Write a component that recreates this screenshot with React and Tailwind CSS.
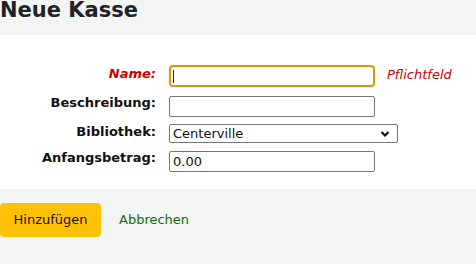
export default function App() {
  return (
    <div className="min-h-[264px] bg-[#f3f4f4] text-[#222] overflow-hidden" style={{ fontFamily: '"DejaVu Sans", sans-serif' }}>
      <h1 className="text-[21px] font-bold leading-[21px] mb-[14px] text-[#1f2226]">Neue Kasse</h1>

      <div className="bg-white pt-[30px] pb-[17px] w-full">
        <ol className="flex flex-col">
          <li className="flex items-start">
            <label className="w-[169px] text-right pr-[13px] text-[13px] leading-[15px] pt-[1px] font-bold italic text-[#c00]">Name:</label>
            <div className="w-[206px] h-[22px] border-2 border-[#e69500] rounded-[4px] bg-white flex items-center pl-[2px]">
              <div className="w-px h-[13px] bg-[#8b0000]" />
            </div>
            <span className="ml-[12px] mt-[2px] text-[13px] leading-[15px] italic text-[#c00]">Pflichtfeld</span>
          </li>

          <li className="flex items-start mt-[9px]">
            <label className="w-[169px] text-right pr-[13px] text-[13px] leading-[15px] -mt-[1px] font-bold text-[#111]">Beschreibung:</label>
            <div className="w-[206px] h-[21px] border border-[#767676] rounded-[2px] bg-white" />
          </li>

          <li className="flex items-start mt-[7px]">
            <label className="w-[169px] text-right pr-[13px] text-[13px] leading-[15px] font-bold text-[#111]">Bibliothek:</label>
            <div className="relative w-[229px] h-[19px] border border-[#767676] rounded-[2px] bg-white flex items-center pl-[3px] text-[13px] text-[#111]">
              Centerville
              <svg className="absolute right-[7px] top-[5px]" width="10" height="8" viewBox="0 0 10 8">
                <path d="M1.5 2 L5 5.5 L8.5 2" fill="none" stroke="#111" strokeWidth="2.2" />
              </svg>
            </div>
          </li>

          <li className="flex items-start mt-[8px]">
            <label className="w-[169px] text-right pr-[13px] text-[13px] leading-[15px] -mt-[1px] font-bold text-[#111]">Anfangsbetrag:</label>
            <div className="w-[206px] h-[21px] border border-[#767676] rounded-[2px] bg-white flex items-center pl-[3px] text-[13px] text-[#111]">
              0.00
            </div>
          </li>
        </ol>
      </div>

      <div className="flex items-center pt-[14px]">
        <button className="h-[34px] w-[101px] bg-[#ffc107] rounded-[4px] text-[13px] text-[#111]">Hinzufügen</button>
        <a className="ml-[18px] text-[13px] text-[#0b6e0b]">Abbrechen</a>
      </div>
    </div>
  );
}
